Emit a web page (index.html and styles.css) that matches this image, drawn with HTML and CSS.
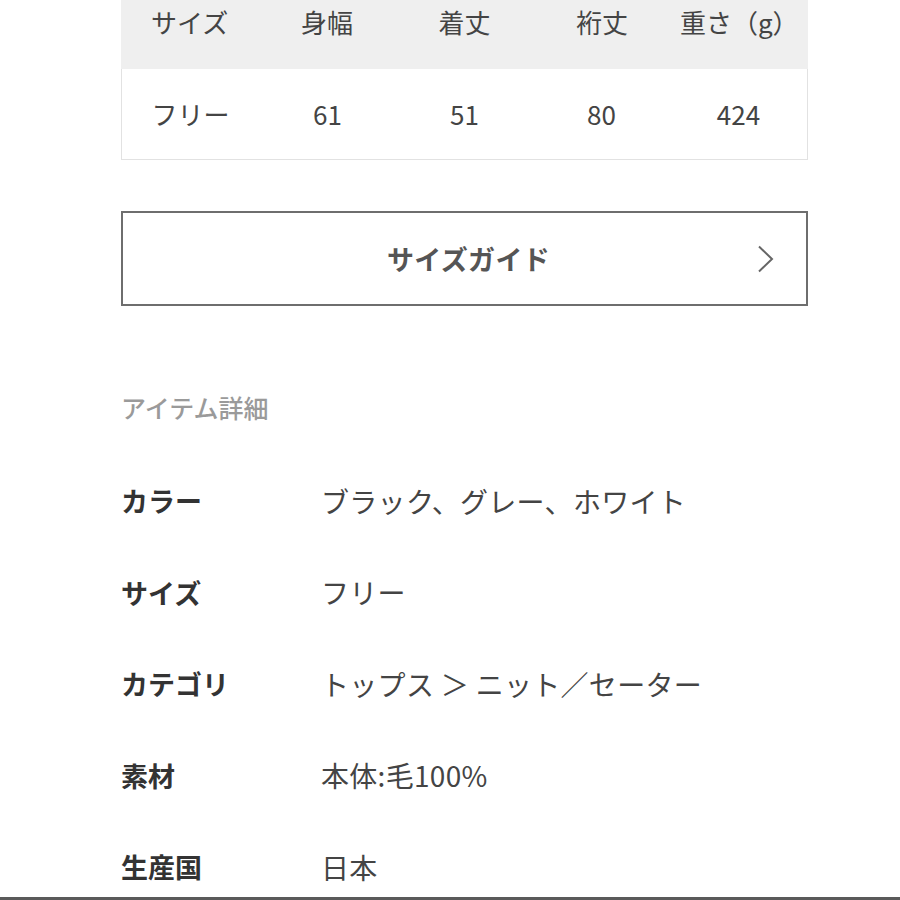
FILE: index.html
```html
<!DOCTYPE html>
<html lang="ja">
<head>
<meta charset="utf-8">
<link rel="stylesheet" href="styles.css">
</head>
<body>
<div class="page">
  <div class="size-table">
    <div class="row head">
      <div class="cell">サイズ</div>
      <div class="cell">身幅</div>
      <div class="cell">着丈</div>
      <div class="cell">裄丈</div>
      <div class="cell">重さ（g）</div>
    </div>
    <div class="row body-row">
      <div class="cell">フリー</div>
      <div class="cell">61</div>
      <div class="cell">51</div>
      <div class="cell">80</div>
      <div class="cell">424</div>
    </div>
  </div>

  <div class="guide-btn">
    <span class="guide-label">サイズガイド</span>
    <svg class="chev" width="18" height="28" viewBox="0 0 18 28"><path d="M2 1.5 L15 14 L2 26.5" fill="none" stroke="#666" stroke-width="2"/></svg>
  </div>

  <div class="section-title">アイテム詳細</div>

  <div class="details">
    <div class="drow"><div class="dl">カラー</div><div class="dv">ブラック、グレー、ホワイト</div></div>
    <div class="drow"><div class="dl">サイズ</div><div class="dv">フリー</div></div>
    <div class="drow"><div class="dl">カテゴリ</div><div class="dv">トップス ＞ ニット／セーター</div></div>
    <div class="drow"><div class="dl">素材</div><div class="dv">本体:毛100%</div></div>
    <div class="drow"><div class="dl">生産国</div><div class="dv">日本</div></div>
  </div>
</div>
<div class="bottom-line"></div>
</body>
</html>
```

FILE: styles.css
```css
html, body {
  margin: 0;
  padding: 0;
  background: #fff;
  overflow: hidden;
}
body {
  font-family: "Noto Sans CJK JP", "Noto Sans", sans-serif;
  color: #444;
}
.page {
  width: 687px;
  padding-left: 121px;
}
.size-table {
  margin-top: -25px;
}
.row {
  display: grid;
  grid-template-columns: repeat(5, 1fr);
  align-items: center;
}
.row .cell {
  text-align: center;
  font-size: 26px;
  line-height: 32px;
  color: #444;
}
.head {
  height: 94px;
  background: #efefef;
}
.body-row {
  height: 91px;
  border: 1px solid #e2e2e2;
  border-top: none;
  box-sizing: border-box;
}
.guide-btn {
  margin-top: 51px;
  height: 95px;
  border: 2px solid #6e6e6e;
  box-sizing: border-box;
  display: flex;
  align-items: center;
  justify-content: center;
  position: relative;
}
.guide-label {
  font-size: 27px;
  font-weight: 700;
  color: #555;
  letter-spacing: 0.3px;
  margin-left: 8px;
}
.chev {
  position: absolute;
  right: 31px;
  top: 32px;
}
.section-title {
  margin-top: 86px;
  font-size: 25px;
  line-height: 30px;
  font-weight: 500;
  color: #9a9a9a;
}
.details {
  margin-top: 33px;
}
.drow {
  display: grid;
  grid-template-columns: 200px 1fr;
  align-items: center;
  height: 91.5px;
}
.dl {
  font-size: 27px;
  font-weight: 700;
  color: #333;
}
.dv {
  font-size: 28px;
  letter-spacing: 0.3px;
  color: #444;
}
.bottom-line {
  position: fixed;
  left: 0;
  right: 0;
  bottom: 0;
  height: 3px;
  background: #5a5a5a;
}
```
